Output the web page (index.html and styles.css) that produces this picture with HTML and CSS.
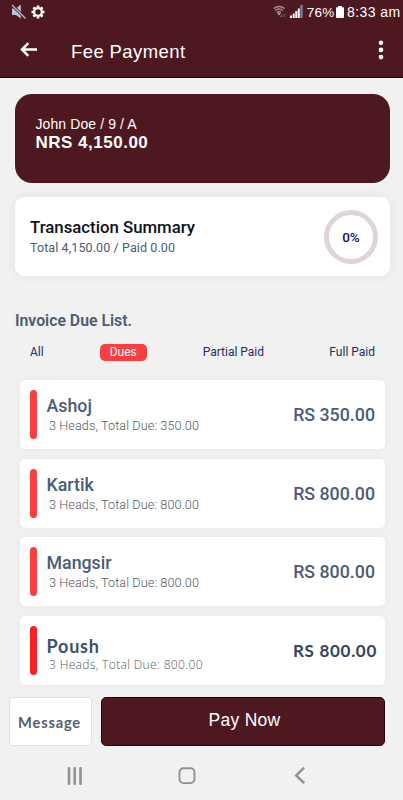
FILE: index.html
```html
<!DOCTYPE html>
<html lang="en">
<head>
    <meta charset="UTF-8">
    <meta name="viewport" content="width=device-width, initial-scale=1.0">
    <title>Fee Payment</title>
    <link rel="stylesheet" href="styles.css">
</head>
<body>
    <header class="header">
        <div class="status-bar">
            <svg class="icon-mute" width="16" height="16" viewBox="0 0 16 16">
                <path d="M1 4.500h4L9.800 .5v14L5 11H1z" fill="#b9c6d6"/>
                <path d="M1 1l13.500 13.500" stroke="#4e1821" stroke-width="3"/>
                <path d="M1 1l13.500 13.500" stroke="#b9c6d6" stroke-width="1.300"/>
            </svg>
            <svg class="icon-gear" width="14" height="14" viewBox="0 0 14 14">
                <circle cx="7" cy="7" r="3.900" fill="none" stroke="#fff" stroke-width="2.400"/>
                <path d="M7 .5v2.200M7 11.300v2.200M.5 7h2.200M11.300 7h2.200M2.400 2.400L4 4M10 10l1.600 1.600M11.600 2.400L10 4M4 10l-1.600 1.600" stroke="#fff" stroke-width="2.600"/>
            </svg>
            <div class="status-right">
                <svg width="13" height="14" viewBox="0 0 13 14">
                    <path d="M.8 3.600Q6 -.8 11.600 3.600M2.400 5.600Q6 2.600 9.800 5.600M4 7.600Q6 6 8 7.600" fill="none" stroke="#a58a93" stroke-width="1.500"/>
                    <path d="M4.200 8.200h3.600L6 10.600z" fill="#c5b3b8"/>
                    <path d="M8.400 9v3M7.400 11l1 1.200M11.200 12.200V9M12.200 10.200L11.200 9" fill="none" stroke="#596c94" stroke-width="1"/>
                </svg>
                <svg class="icon-signal" width="13" height="13" viewBox="0 0 13 13">
                    <path d="M0 10.500h2V13H0zM2.700 8.500h2V13h-2zM5.300 6h2v7h-2zM7.800 3.500h2V13h-2z" fill="#fff"/>
                    <path d="M10.300 0h2.400v13h-2.400z" fill="#71809f"/>
                </svg>
                <span class="battery-text">76%</span>
                <svg class="icon-battery" width="8" height="12" viewBox="0 0 8 12">
                    <path d="M2 0h4v1.300h1.200q.8 0 .8.800V11q0 1-1 1H1q-1 0-1-1V2.100q0-.8.800-.8H2z" fill="#fff"/>
                </svg>
                <span class="clock">8:33 am</span>
            </div>
        </div>
        <div class="title-bar">
            <svg class="icon-back" width="18" height="16" viewBox="0 0 18 16">
                <path d="M8.300 1.200L2 7.500l6.300 6.300M2 7.500h15" fill="none" stroke="#fff" stroke-width="2.500"/>
            </svg>
            <h1>Fee Payment</h1>
            <svg class="icon-more" width="6" height="20" viewBox="0 0 6 20">
                <circle cx="3" cy="2.700" r="2.300" fill="#fff"/>
                <circle cx="3" cy="9.900" r="2.300" fill="#fff"/>
                <circle cx="3" cy="17.100" r="2.300" fill="#fff"/>
            </svg>
        </div>
    </header>

    <main>
        <section class="student-card">
            <div class="student-name">John Doe / 9 / A</div>
            <div class="student-amount">NRS 4,150.00</div>
        </section>

        <section class="summary-card">
            <div>
                <h2>Transaction Summary</h2>
                <p>Total 4,150.00 / Paid 0.00</p>
            </div>
            <div class="progress-ring">0%</div>
        </section>

        <h3 class="list-title">Invoice Due List.</h3>
        <nav class="tabs">
            <span>All</span>
            <span class="active">Dues</span>
            <span class="partial">Partial Paid</span>
            <span>Full Paid</span>
        </nav>

        <div class="invoices">
            <div class="invoice">
                <div class="bar"></div>
                <div class="info">
                    <div class="month">Ashoj</div>
                    <div class="detail">3 Heads, Total Due: 350.00</div>
                </div>
                <div class="price">RS 350.00</div>
            </div>
            <div class="invoice">
                <div class="bar"></div>
                <div class="info">
                    <div class="month">Kartik</div>
                    <div class="detail">3 Heads, Total Due: 800.00</div>
                </div>
                <div class="price">RS 800.00</div>
            </div>
            <div class="invoice">
                <div class="bar"></div>
                <div class="info">
                    <div class="month">Mangsir</div>
                    <div class="detail">3 Heads, Total Due: 800.00</div>
                </div>
                <div class="price">RS 800.00</div>
            </div>
            <div class="invoice last">
                <div class="bar"></div>
                <div class="info">
                    <div class="month">Poush</div>
                    <div class="detail">3 Heads, Total Due: 800.00</div>
                </div>
                <div class="price">RS 800.00</div>
            </div>
        </div>
    </main>

    <div class="actions">
        <div class="message-btn">Message</div>
        <div class="pay-btn">Pay Now</div>
    </div>

    <footer class="phone-nav">
        <svg width="16" height="18" viewBox="0 0 16 18">
            <path d="M2 1.200v15.600M7.700 1.200v15.600M13.500 1.200v15.600" stroke="#929292" stroke-width="2.600" stroke-linecap="round"/>
        </svg>
        <svg class="icon-home" width="18" height="18" viewBox="0 0 18 18">
            <rect x="1.500" y="1.300" width="15" height="14.800" rx="4" fill="none" stroke="#929292" stroke-width="1.900"/>
        </svg>
        <svg width="12" height="18" viewBox="0 0 12 18">
            <path d="M10.200 .6L2.200 8.400l8 7.800" fill="none" stroke="#929292" stroke-width="2.500"/>
        </svg>
    </footer>
</body>
</html>
```
FILE: styles.css
```css
* {
    box-sizing: border-box;
}
body {
    margin: 0;
    height: 800px;
    overflow: hidden;
    background-color: #f1f1f1;
    font-family: Roboto, sans-serif;
    color: #4c5b76;
}
h1, h2, h3, p {
    margin: 0;
    font-weight: normal;
}
svg {
    display: block;
    flex: none;
}
div, span, h1, h2, h3, p {
    white-space: nowrap;
}
.header {
    height: 78px;
    background-color: #4e1821;
    border-bottom: 1px solid #2c0008;
    color: #fff;
    font-family: "Liberation Sans", Arial, sans-serif;
}
.status-bar {
    display: flex;
    align-items: center;
    height: 24px;
    padding: 0 2.5px 0 11px;
}
.icon-gear {
    margin-left: 4px;
}
.status-right {
    display: flex;
    align-items: center;
    margin-left: auto;
}
.icon-signal {
    margin: 0 3.5px 2px 4px;
}
.battery-text {
    font-size: 13.5px;
    letter-spacing: 0.3px;
}
.icon-battery {
    margin: 0 3px 0 1.5px;
}
.clock {
    font-size: 14px;
    letter-spacing: 0.4px;
}
.title-bar {
    display: flex;
    align-items: center;
    height: 52px;
    padding: 0 19px 0 20px;
}
.icon-more {
    margin-left: auto;
}
h1 {
    margin: 3px 0 0 33px;
    font-size: 18.5px;
    line-height: 22px;
    letter-spacing: 0.4px;
}
main {
    padding: 16px 13px 0 15px;
}
.student-card {
    height: 89px;
    padding: 22px 20.5px;
    border-radius: 17px;
    background-color: #4e1821;
    color: #fff;
    font-family: "Liberation Sans", Arial, sans-serif;
}
.student-name {
    font-size: 14px;
    line-height: 17px;
    letter-spacing: 0.1px;
}
.student-amount {
    font-size: 17px;
    font-weight: bold;
    line-height: 20px;
    letter-spacing: 0.5px;
}
.student-card,
.summary-card {
    width: 375px;
}
.summary-card {
    display: flex;
    justify-content: space-between;
    align-items: center;
    height: 79px;
    margin-top: 14px;
    padding: 0 12px 0 15px;
    border-radius: 9px;
    background-color: #fff;
    box-shadow: 0 0 14px rgba(0, 0, 0, 0.06);
}
h2 {
    font-size: 16.8px;
    font-weight: 500;
    line-height: 22px;
    color: #0e1018;
}
.summary-card p {
    font-size: 12.5px;
    line-height: 20px;
    letter-spacing: 0.1px;
}
.progress-ring {
    display: flex;
    justify-content: center;
    align-items: center;
    width: 54px;
    height: 54px;
    border: 5px solid #dfd5d5;
    border-radius: 50%;
    color: #140a80;
    font-size: 13.5px;
    font-weight: 500;
}
.list-title {
    margin-top: 35px;
    font-size: 15.8px;
    font-weight: 600;
    line-height: 20px;
}
.tabs {
    display: flex;
    align-items: center;
    height: 18px;
    margin-top: 12px;
    padding: 0 0 0 15px;
    font-size: 12px;
    color: #1f2d64;
}
.tabs .active {
    width: 47px;
    margin: 0 56px;
    line-height: 17px;
    border-radius: 5px;
    background-color: #fb3e3f;
    color: #fff;
    text-align: center;
}
.partial {
    margin-right: auto;
}
.tabs span:last-child {
    margin-right: 15px;
}
.invoices {
    display: flex;
    flex-direction: column;
    gap: 9.7px;
    width: 365px;
    margin: 19px 0 0 5px;
}
.invoice {
    display: flex;
    height: 69px;
    padding: 10px;
    border-radius: 5px;
    background-color: #fff;
    box-shadow: 0 0 9px rgba(0, 0, 0, 0.05);
}
.bar {
    width: 7px;
    border-radius: 4px;
    background-color: #fb3e3f;
}
.info {
    margin-left: 9.5px;
    padding-top: 5px;
}
.month {
    font-size: 17.8px;
    font-weight: 500;
    line-height: 22px;
}
.detail {
    padding-left: 2.5px;
    font-size: 12.7px;
    font-weight: 300;
    line-height: 18.5px;
    letter-spacing: 0.08px;
    color: #555960;
}
.price {
    margin-left: auto;
    font-size: 17.8px;
    font-weight: 500;
    line-height: 50px;
}
/* the last invoice uses a slightly different type style */
.last .bar {
    background-color: #fb2023;
}
.last .info {
    padding-top: 9px;
}
.last .month {
    font-family: Lato, sans-serif;
    font-size: 18px;
    font-weight: 700;
    letter-spacing: 0.8px;
    color: #40516a;
}
.last .detail {
    font-family: "Open Sans", sans-serif;
    font-size: 12px;
    line-height: 16px;
    letter-spacing: 0.35px;
}
.last .price {
    margin-right: -2px;
    font-family: Lato, sans-serif;
    font-size: 17px;
    font-weight: 700;
    letter-spacing: 0.7px;
    line-height: 49px;
    color: #33455d;
}
.actions {
    display: flex;
    gap: 9px;
    height: 49px;
    margin-top: 12px;
    padding: 0 18px 0 9px;
}
.message-btn {
    width: 83px;
    padding-right: 2px;
    border: 1px solid #e0e0e0;
    border-radius: 3px;
    background-color: #fff;
    font-family: Lato, sans-serif;
    font-size: 14.7px;
    font-weight: 700;
    line-height: 48px;
    letter-spacing: 0.8px;
    text-align: center;
    color: #55616c;
}
.pay-btn {
    flex: 1;
    padding-left: 3px;
    border: 1px solid #2c0008;
    border-radius: 5px;
    background-color: #4e1821;
    font-family: "Liberation Sans", Arial, sans-serif;
    font-size: 17.5px;
    line-height: 45px;
    letter-spacing: 0.3px;
    text-align: center;
    color: #fff;
}
.phone-nav {
    display: flex;
    justify-content: space-between;
    padding: 21px 97px 0 67px;
}
.icon-home {
    margin-right: 3px;
}
```
